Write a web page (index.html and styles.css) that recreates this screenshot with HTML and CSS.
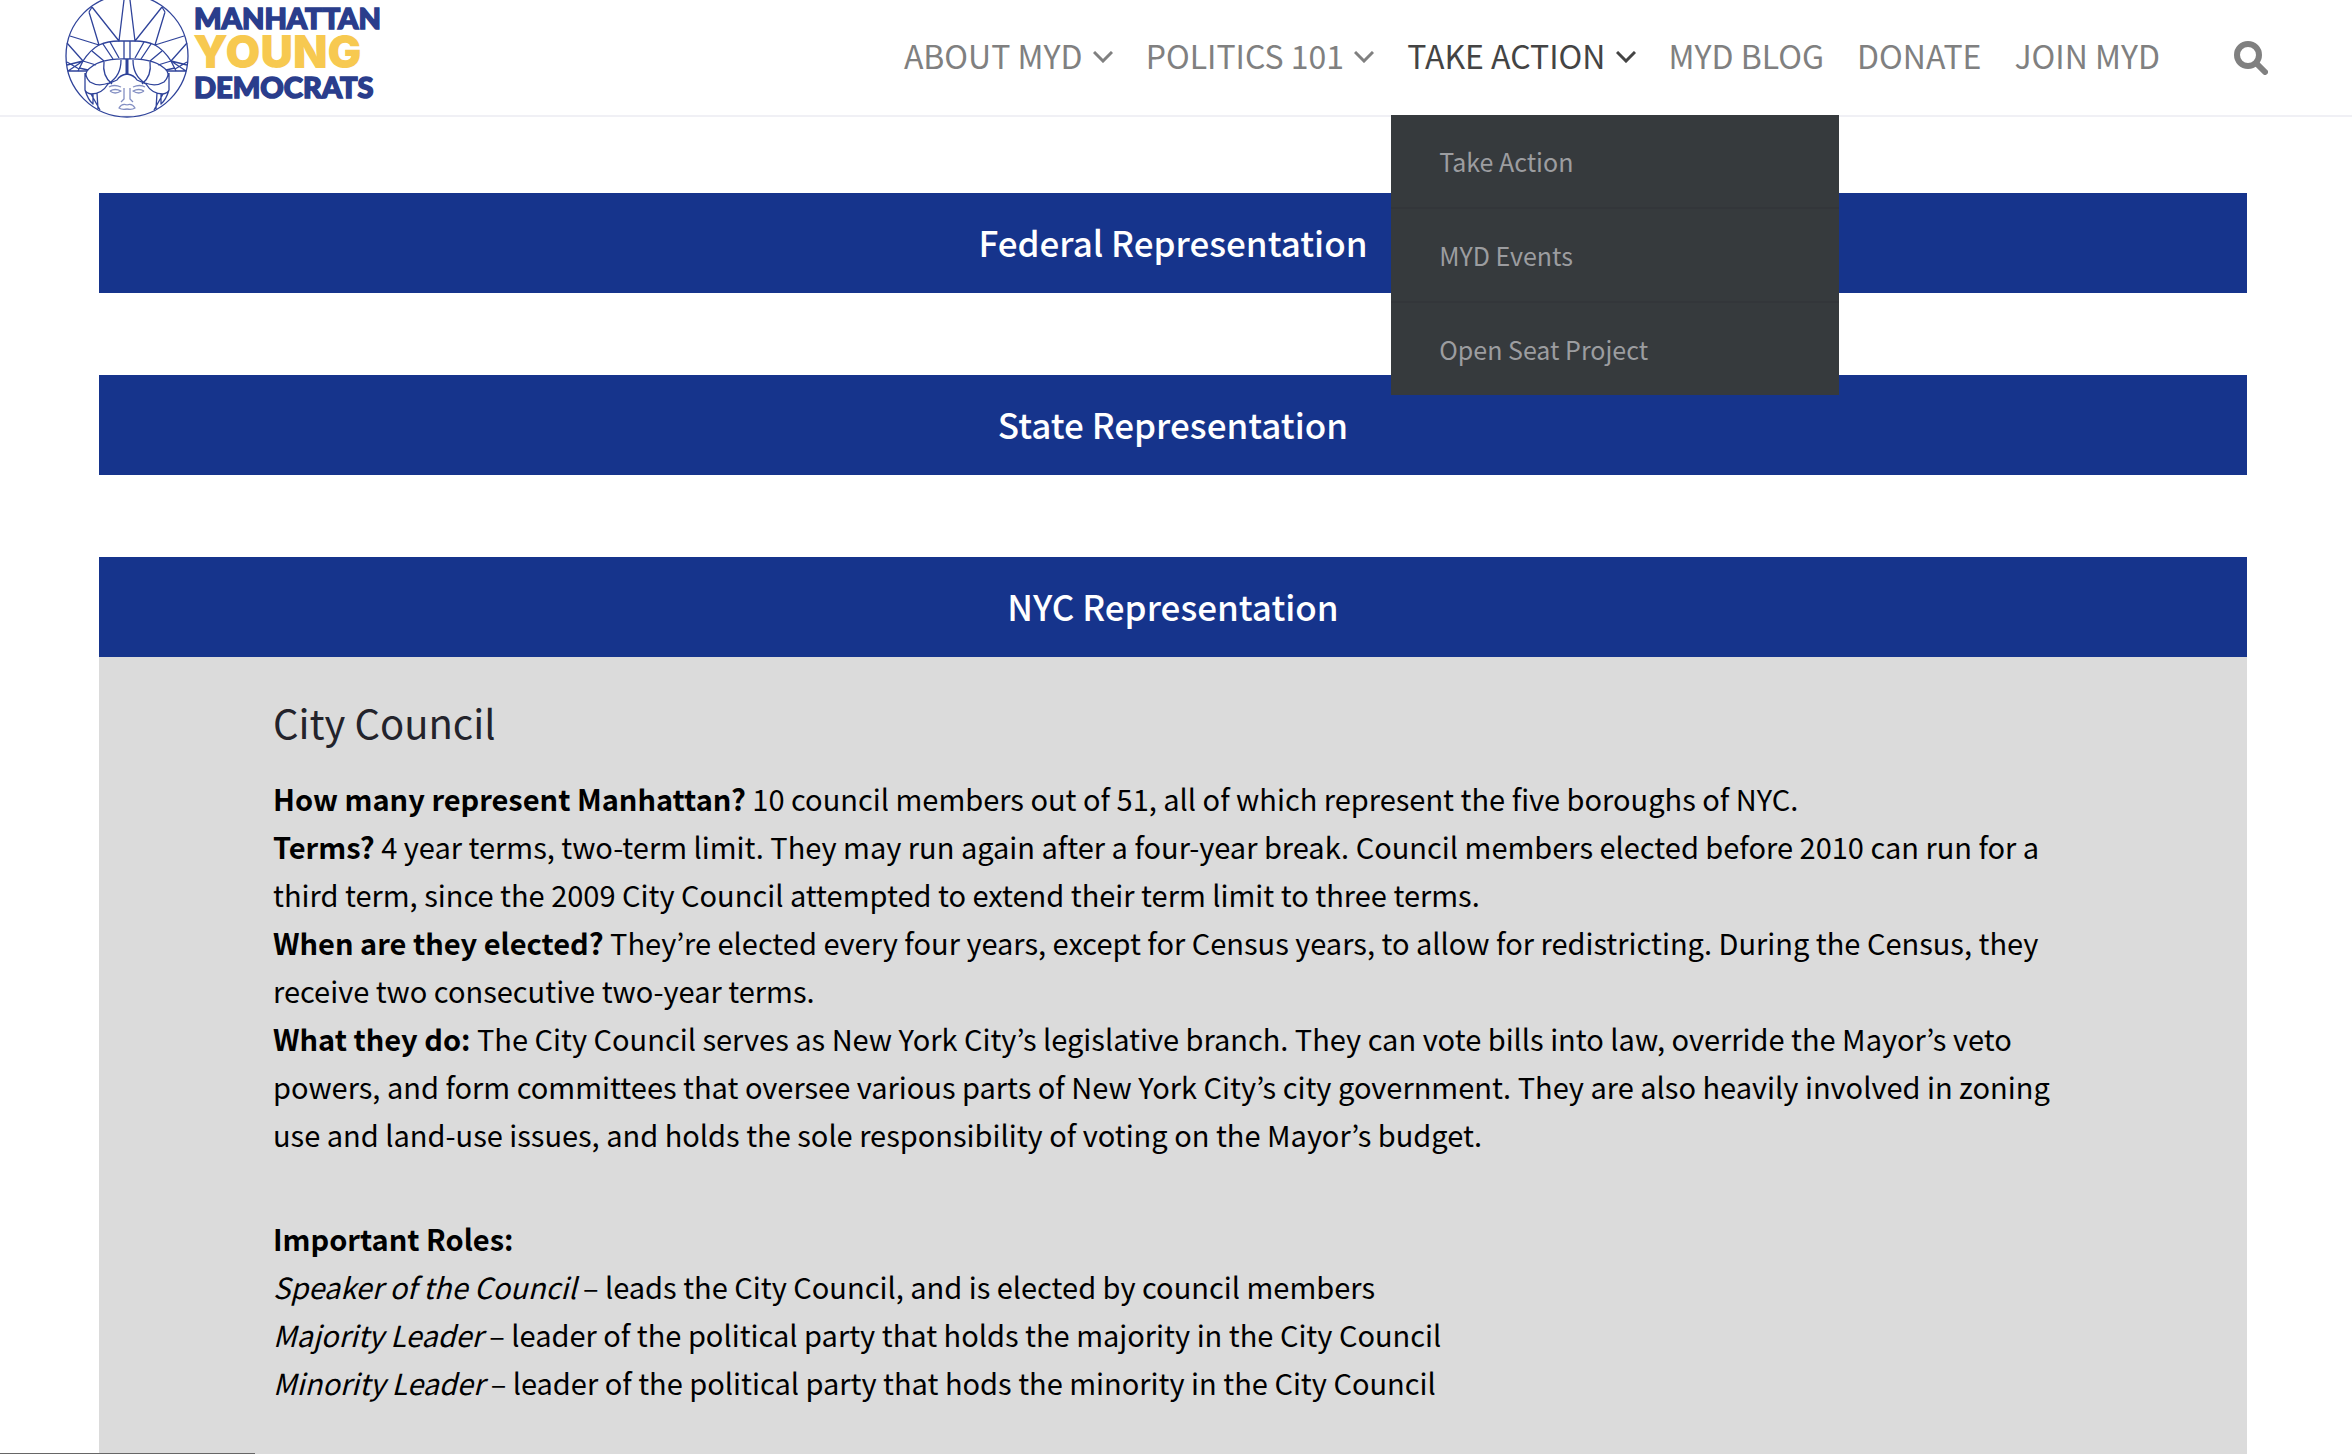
FILE: index.html
```html
<!DOCTYPE html>
<html lang="en">
<head>
    <meta charset="UTF-8">
    <meta name="viewport" content="width=device-width, initial-scale=1.0">
    <title>Manhattan Young Democrats</title>
    <link rel="stylesheet" href="styles.css">
</head>
<body>
    <header class="site-header">
        <a class="logo" href="#" aria-label="Manhattan Young Democrats">
            <svg class="logo-image" width="316" height="118" viewBox="64 0 316 118">
                <g class="logo-lines">
                    <circle cx="127" cy="56" r="61"/>
                    <!-- left half, mirrored below -->
                    <g id="half">
                        <!-- rays -->
                        <path d="M124 0L119 41L92 7M89 12L99 45L70 36M67 43L83 61L68 71H87M67 62L79 69M83 61L67 65M89 12L92 7"/>
                        <!-- crown -->
                        <path d="M83 61Q90 50 99 45Q108 41 119 41H127M78 71L83 61M127 59Q98 58 87 71"/>
                        <path d="M124 41V59M110 42L119 58M103 44L113 59M92 51L104 61M83 61L96 65M79 68L88 70"/>
                        <!-- hair -->
                        <path d="M87 71Q84 76 90 82Q98 87 109 83Q121 76 121 60M104 62Q102 76 112 84M127 74Q120 75 117 80L108 84Q102 94 91 94Q86 93 85 90V73M85 90Q88 100 93 104V94M98 109L97 93M91 94L100 110"/>
                        <!-- eye -->
                        <path class="soft" d="M109 87Q114 84 121 87M110 91Q115 88 121 91Q115 95 110 91M124 88V99L121 102M127 105Q122 103 119 108Q122 110 127 109"/>
                    </g>
                    <use href="#half" transform="translate(254 0) scale(-1 1)"/>
                    <path class="trunk" d="M127 59V75"/>
                </g>
                <text class="logo-small" x="194" y="29">MANHATTAN</text>
                <text class="logo-large" x="193" y="68">YOUNG</text>
                <text class="logo-small" x="194" y="98">DEMOCRATS</text>
            </svg>
        </a>
        <nav class="main-nav">
            <ul class="menu">
                <li class="menu-item">
                    <a href="#">ABOUT MYD <svg class="chevron" viewBox="0 0 20 12"><path d="M1 1l9 9 9-9"/></svg></a>
                </li>
                <li class="menu-item">
                    <a href="#">POLITICS 101 <svg class="chevron" viewBox="0 0 20 12"><path d="M1 1l9 9 9-9"/></svg></a>
                </li>
                <li class="menu-item active">
                    <a href="#">TAKE ACTION <svg class="chevron" viewBox="0 0 20 12"><path d="M1 1l9 9 9-9"/></svg></a>
                    <ul class="sub-menu">
                        <li><a href="#">Take Action</a></li>
                        <li><a href="#">MYD Events</a></li>
                        <li><a href="#">Open Seat Project</a></li>
                    </ul>
                </li>
                <li class="menu-item"><a href="#">MYD BLOG</a></li>
                <li class="menu-item"><a href="#">DONATE</a></li>
                <li class="menu-item"><a href="#">JOIN MYD</a></li>
            </ul>
            <button class="search-button" type="button" aria-label="Search">
                <svg width="34" height="34" viewBox="0 0 34 34"><circle cx="14" cy="14" r="11"/><path d="M22 22l9 9"/></svg>
            </button>
        </nav>
    </header>

    <main class="content">
        <section class="panel">
            <button class="panel-title" type="button">Federal Representation</button>
        </section>
        <section class="panel">
            <button class="panel-title" type="button">State Representation</button>
        </section>
        <section class="panel">
            <button class="panel-title" type="button">NYC Representation</button>
            <div class="panel-body">
                <h3>City Council</h3>
                <p>
                    <strong>How many represent Manhattan?</strong> 10 council members out of 51, all of which represent the five boroughs of NYC.<br>
                    <strong>Terms?</strong> 4 year terms, two-term limit. They may run again after a four-year break. Council members elected before 2010 can run for a third term, since the 2009 City Council attempted to extend their term limit to three terms.<br>
                    <strong>When are they elected?</strong> They’re elected every four years, except for Census years, to allow for redistricting. During the Census, they receive two consecutive two-year terms.<br>
                    <strong>What they do:</strong> The City Council serves as New York City’s legislative branch. They can vote bills into law, override the Mayor’s veto powers, and form committees that oversee various parts of New York City’s city government. They are also heavily involved in zoning use and land-use issues, and holds the sole responsibility of voting on the Mayor’s budget.
                </p>
                <p>
                    <strong>Important Roles:</strong><br>
                    <em>Speaker of the Council</em> – leads the City Council, and is elected by council members<br>
                    <em>Majority Leader</em> – leader of the political party that holds the majority in the City Council<br>
                    <em>Minority Leader</em> – leader of the political party that hods the minority in the City Council
                </p>
            </div>
        </section>
    </main>
    <div class="status-bar"></div>
</body>
</html>
```

FILE: styles.css
```css
* {
    box-sizing: border-box;
}

body {
    margin: 0;
    height: 100vh;
    overflow: hidden;
    background-color: #fff;
    color: #000;
    font-family: "Noto Sans CJK KR", "Open Sans", sans-serif;
    font-size: 29px;
    line-height: 48px;
}

a {
    color: inherit;
    text-decoration: none;
}

ul {
    list-style: none;
    margin: 0;
    padding: 0;
}

/* Header */
.site-header {
    display: flex;
    justify-content: space-between;
    height: 117px;
    padding: 0 84px 0 64px;
    border-bottom: 2px solid #f0f0f5;
}

.logo-image {
    display: block;
}

.logo-lines {
    fill: none;
    stroke: #2f439a;
    stroke-width: 1.3;
    stroke-linejoin: round;
}

.soft {
    stroke-opacity: 0.6;
}

.trunk {
    stroke-width: 3;
}

.logo-small {
    font-family: Lato, sans-serif;
    font-size: 29px;
    font-weight: 900;
    fill: #2a3d8c;
    stroke: #2a3d8c;
    stroke-width: 1.5;
}

.logo-large {
    font-family: Inter, sans-serif;
    font-size: 45px;
    font-weight: 900;
    fill: #f7c950;
}

.main-nav,
.menu {
    display: flex;
}

.menu {
    gap: 1px;
}

.menu-item {
    position: relative;
    padding: 0 16px;
    color: #808080;
    font-size: 32px;
    line-height: 110px;
    white-space: nowrap;
}

.menu-item.active {
    color: #444;
}

.chevron {
    width: 20px;
    height: 12px;
    margin-left: 3px;
    vertical-align: 6px;
    fill: none;
    stroke: currentColor;
    stroke-width: 3;
}

.sub-menu {
    position: absolute;
    top: 115px;
    left: 0;
    z-index: 10;
    width: 448px;
    background-color: #363a3d;
    color: #9c9da0;
    font-size: 25px;
    line-height: 92px;
}

.sub-menu li {
    height: 94px;
    padding: 0 48px;
    border-bottom: 2px solid #33363a;
}

.sub-menu li:last-child {
    height: 92px;
    border-bottom: 0;
}

.search-button {
    margin: 0 0 0 58px;
    padding: 0;
    border: 0;
    background: none;
    color: #808080;
}

.search-button svg {
    display: block;
    fill: none;
    stroke: currentColor;
    stroke-width: 6;
    stroke-linecap: round;
}

/* Representation panels */
.content {
    padding: 76px 105px 0 99px;
}

.panel {
    margin-bottom: 82px;
}

.panel-title {
    display: block;
    width: 100%;
    padding: 0 0 2px;
    border: 0;
    background-color: #16348c;
    color: #fff;
    font-family: inherit;
    font-size: 35px;
    font-weight: 500;
    line-height: 98px;
}

.panel-body {
    padding: 37px 174px 100px;
    background-color: #dbdbdb;
}

.panel-body h3 {
    margin: 0 0 24px;
    color: #23232b;
    font-size: 40px;
    font-weight: 400;
    line-height: 56px;
}

.panel-body p {
    margin: 0 0 56px;
}

.status-bar {
    position: fixed;
    bottom: 0;
    left: 0;
    width: 255px;
    height: 1px;
    background-color: #666;
}
```
